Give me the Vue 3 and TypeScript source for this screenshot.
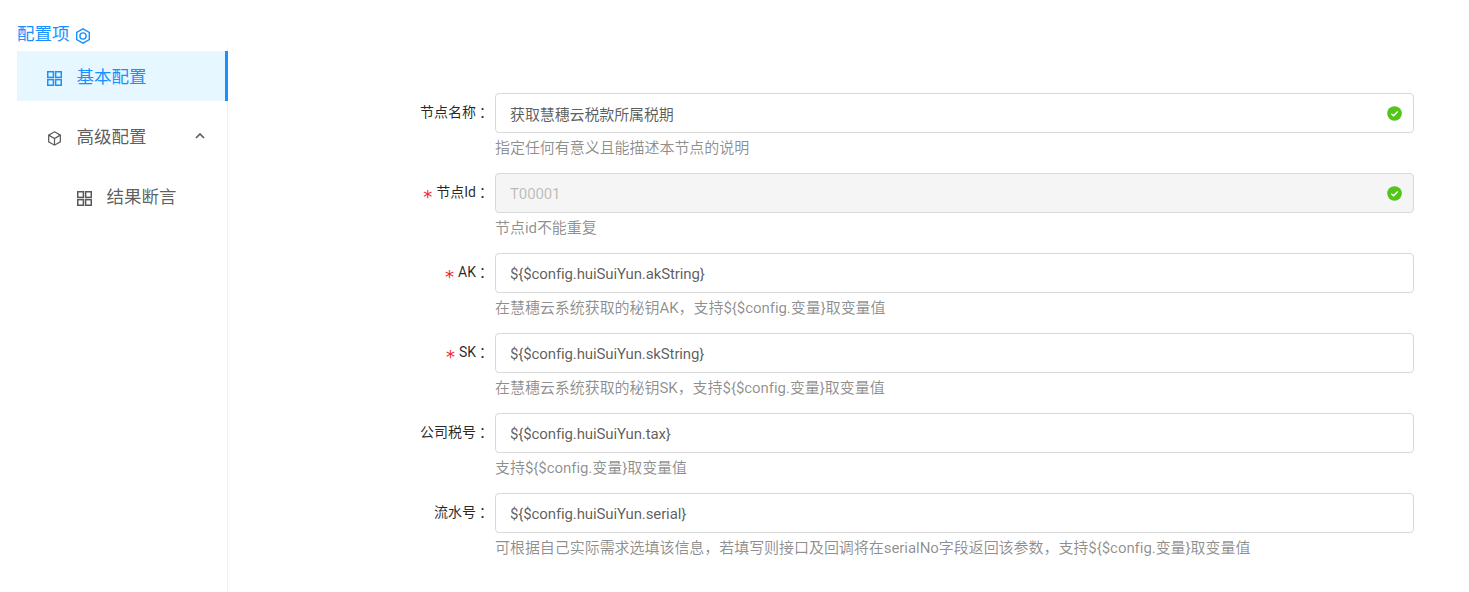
<script setup lang="ts">
interface Field {
  label: string
  required: boolean
  value: string
  help: string
  disabled?: boolean
  success?: boolean
}

const fields: Field[] = [
  { label: '节点名称', required: false, value: '获取慧穗云税款所属税期', help: '指定任何有意义且能描述本节点的说明', success: true },
  { label: '节点Id', required: true, value: 'T00001', help: '节点id不能重复', disabled: true, success: true },
  { label: 'AK', required: true, value: '${$config.huiSuiYun.akString}', help: '在慧穗云系统获取的秘钥AK，支持${$config.变量}取变量值' },
  { label: 'SK', required: true, value: '${$config.huiSuiYun.skString}', help: '在慧穗云系统获取的秘钥SK，支持${$config.变量}取变量值' },
  { label: '公司税号', required: false, value: '${$config.huiSuiYun.tax}', help: '支持${$config.变量}取变量值' },
  { label: '流水号', required: false, value: '${$config.huiSuiYun.serial}', help: '可根据自己实际需求选填该信息，若填写则接口及回调将在serialNo字段返回该参数，支持${$config.变量}取变量值' },
]
</script>

<template>
  <div class="page">
    <aside class="side">
      <div class="side-title">
        <span>配置项</span>
        <svg class="title-icon" viewBox="0 0 16 16" fill="none" stroke="currentColor" stroke-width="1.4">
          <path d="M8 .9 14.3 4.4V11.6L8 15.1 1.7 11.6V4.4Z" />
          <circle cx="8" cy="8" r="3.1" />
        </svg>
      </div>
      <nav class="menu">
        <div class="item active">
          <svg class="icon" viewBox="0 0 16 16" fill="none" stroke="currentColor" stroke-width="1.6">
            <rect x=".8" y=".8" width="6" height="6" /><rect x="9.2" y=".8" width="6" height="6" />
            <rect x=".8" y="9.2" width="6" height="6" /><rect x="9.2" y="9.2" width="6" height="6" />
          </svg>
          <span>基本配置</span>
        </div>
        <div class="item">
          <svg class="icon" viewBox="0 0 16 16" fill="none" stroke="currentColor" stroke-width="1.3">
            <path d="M8 .9 14.2 4.4V11.6L8 15.1 1.8 11.6V4.4Z" />
            <path d="M1.8 4.4 8 8 14.2 4.4M8 8V15" />
          </svg>
          <span>高级配置</span>
          <svg class="caret" viewBox="0 0 10 6" fill="none" stroke="currentColor" stroke-width="1.6">
            <path d="M1 5 5 1 9 5" />
          </svg>
        </div>
        <div class="item sub">
          <svg class="icon" viewBox="0 0 16 16" fill="none" stroke="currentColor" stroke-width="1.6">
            <rect x=".8" y=".8" width="6" height="6" /><rect x="9.2" y=".8" width="6" height="6" />
            <rect x=".8" y="9.2" width="6" height="6" /><rect x="9.2" y="9.2" width="6" height="6" />
          </svg>
          <span>结果断言</span>
        </div>
      </nav>
    </aside>

    <main class="main">
      <form class="form">
        <div v-for="f in fields" :key="f.label" class="row">
          <label class="label">
            <span v-if="f.required" class="star">*</span>{{ f.label }}<span class="colon">：</span>
          </label>
          <div class="control">
            <div class="input-wrap">
              <input class="input" type="text" :value="f.value" :disabled="f.disabled" />
              <svg v-if="f.success" class="ok" viewBox="0 0 16 16">
                <circle cx="8" cy="8" r="7.8" fill="#52c41a" />
                <path d="M4.6 8.2 7 10.5 11.4 5.8" fill="none" stroke="#fff" stroke-width="1.5" />
              </svg>
            </div>
            <div class="help">{{ f.help }}</div>
          </div>
        </div>
      </form>
    </main>
  </div>
</template>

<style>
html, body { margin: 0; background: #fff; }
</style>

<style scoped>
.page {
  display: flex;
  width: 1469px;
  height: 592px;
  overflow: hidden;
  padding-left: 17px;
  box-sizing: border-box;
  font-family: Roboto, "Noto Sans CJK SC", sans-serif;
  font-size: 14px;
  color: rgba(0, 0, 0, 0.85);
  background: #fff;
}
.side { width: 211px; flex: none; display: flex; flex-direction: column; }
.side-title {
  height: 24px;
  margin-top: 22px;
  margin-bottom: 5px;
  display: flex;
  align-items: center;
  gap: 5px;
  font-size: 17.5px;
  line-height: 24px;
  color: #1890ff;
}
.title-icon { width: 16px; height: 16px; margin-top: 3px; }
.menu { flex: 1; border-right: 1px solid #f0f0f0; margin-top: -4px; padding-top: 4px; }
.item {
  display: flex;
  align-items: center;
  height: 50px;
  box-sizing: border-box;
  padding-left: 30px;
  padding-bottom: 2px;
  margin-bottom: 10px;
  font-size: 17.5px;
  color: rgba(0, 0, 0, 0.65);
  position: relative;
}
.item .icon { width: 15px; height: 15px; flex: none; margin-right: 14.5px; margin-top: 6px; color: #595959; }
.item.active { background: #e6f7ff; color: #1890ff; margin-right: -1px; border-right: 3px solid #1890ff; }
.item.active .icon { color: #1890ff; }
.item.sub { padding-left: 60px; }
.caret { position: absolute; right: 22px; top: 22px; width: 10px; height: 6px; color: #595959; }
.main { flex: 1; min-width: 0; padding-top: 93px; }
.form { display: flex; flex-direction: column; gap: 0; }
.row { display: grid; grid-template-columns: 267px 919px; height: 80px; }
.label {
  height: 40px;
  line-height: 38px;
  text-align: right;
  white-space: nowrap;
  color: rgba(0, 0, 0, 0.85);
}
.star {
  color: #f5222d;
  margin-right: 4px;
  font-family: "DejaVu Sans", sans-serif;
  font-size: 18px;
  line-height: 1;
  vertical-align: -6px;
}
.colon { display: inline-block; width: 16px; padding-left: 3px; text-align: left; }
.input-wrap { position: relative; height: 40px; }
.input {
  display: block;
  width: 100%;
  height: 40px;
  box-sizing: border-box;
  padding: 1px 40px 0 14px;
  border: 1px solid #d9d9d9;
  border-radius: 4px;
  font: inherit;
  font-size: 15px;
  letter-spacing: -0.12px;
  color: rgba(0, 0, 0, 0.65);
  background: #fff;
  outline: none;
}
.input:disabled { background: #f5f5f5; color: rgba(0, 0, 0, 0.25); }
.ok { position: absolute; right: 12px; top: 13px; width: 15px; height: 15px; }
.help {
  margin-top: 5px;
  line-height: 20px;
  font-size: 15px;
  letter-spacing: -0.05px;
  color: rgba(0, 0, 0, 0.45);
  white-space: nowrap;
}
</style>
